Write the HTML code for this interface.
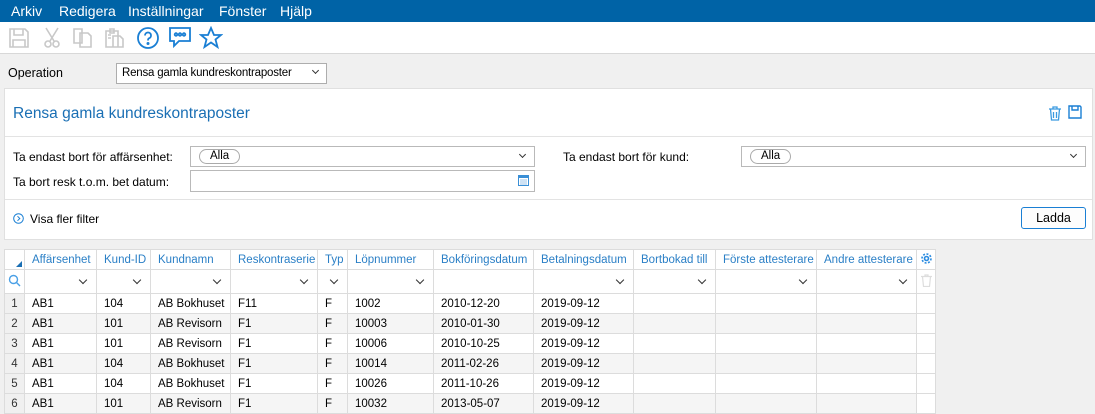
<!DOCTYPE html>
<html><head><meta charset="utf-8"><style>
*{box-sizing:border-box;margin:0;padding:0}
body{width:1095px;height:413px;overflow:hidden;background:#f0f0f0;font-family:"Liberation Sans",sans-serif;font-size:12px;color:#000;position:relative}
.a{position:absolute}
.menu{left:0;top:0;width:1095px;height:22px;background:#0063a6;color:#fff;font-size:14px}
.menu span{position:absolute;top:3px}
.tb{left:0;top:22px;width:1095px;height:32px;background:#fff;border-bottom:1px solid #d8d8d8}
.panel{left:4px;top:88px;width:1089px;height:152px;background:#fff;border:1px solid #e0e0e0}
.hl{height:1px;background:#e3e3e3}
.inp{border:1px solid #b9b9b9;background:#fff;height:21px}
.pill{position:absolute;left:8px;top:2px;height:15px;border:1px solid #aaa;border-radius:8px;padding:0 10px;font-size:11.5px;line-height:13px}
.chev{position:absolute;width:6px;height:6px;border-right:1.3px solid #333;border-bottom:1.3px solid #333;transform:rotate(45deg)}
table{position:absolute;left:4px;top:249px;border-collapse:collapse;table-layout:fixed;background:#fff}
td{border:1px solid #dcdcdc;height:20px;padding:0 0 0 7px;white-space:nowrap;overflow:hidden;font-size:11.5px}
tr.h td{color:#2a7fc6;background:#fff;height:20px;font-size:11.5px}
tr.f td{height:24px;position:relative}
tr.f td .chev{right:10px;top:7px}
td.n{background:#f0f0f0;padding:0;text-align:center;color:#333}
tr.e td{background:#f5f5f5}
tr.e td.n{background:#f0f0f0}
</style></head><body>
<div class="a menu"><span style="left:11px">Arkiv</span><span style="left:59px">Redigera</span><span style="left:128px">Inställningar</span><span style="left:219px">Fönster</span><span style="left:280px">Hjälp</span></div>
<div class="a tb">
<svg class="a" style="left:8px;top:5px" width="22" height="22" viewBox="0 0 22 22" fill="none" stroke="#c8c8c8" stroke-width="1.6"><path d="M2 2h15l3 3v15H2z"/><path d="M6 2v6h9V2M5 20v-7h12v7"/></svg>
<svg class="a" style="left:41px;top:5px" width="22" height="22" viewBox="0 0 22 22" fill="none" stroke="#c8c8c8" stroke-width="1.6"><path d="M5 1l8 13M17 1L9 14"/><circle cx="7" cy="17" r="3"/><circle cx="15" cy="17" r="3"/></svg>
<svg class="a" style="left:72px;top:5px" width="22" height="22" viewBox="0 0 22 22" fill="none" stroke="#c8c8c8" stroke-width="1.6"><path d="M2 2h8v14H2zM8 6h8l3 3v11H8z"/></svg>
<svg class="a" style="left:104px;top:5px" width="22" height="22" viewBox="0 0 22 22" fill="none" stroke="#c8c8c8" stroke-width="1.6"><path d="M2 4h12v16H2zM6 2h4v4H6zM9 9h7l3 3v8H9zM4 8h3M4 11h3"/></svg>
<svg class="a" style="left:136px;top:4px" width="24" height="24" viewBox="0 0 24 24" fill="none" stroke="#1a7fd4" stroke-width="1.8"><circle cx="12" cy="12" r="10"/><path d="M9 9.5a3 3 0 1 1 4 2.8c-1 .4-1 1.2-1 2.2"/><circle cx="12" cy="17.5" r=".6" fill="#1a7fd4"/></svg>
<svg class="a" style="left:167px;top:4px" width="26" height="24" viewBox="0 0 26 24" fill="none" stroke="#1a7fd4" stroke-width="1.8"><path d="M3 2h20v13H12l-5 5v-5H3z"/><circle cx="9" cy="8.5" r="1.3"/><circle cx="13" cy="8.5" r="1.3"/><circle cx="17" cy="8.5" r="1.3"/></svg>
<svg class="a" style="left:199px;top:4px" width="24" height="24" viewBox="0 0 24 24" fill="none" stroke="#1a7fd4" stroke-width="1.8"><path d="M12 2l3 7h7l-5.5 4.5 2 7.5L12 16.5 5.5 21l2-7.5L2 9h7z"/></svg>
</div>
<div class="a" style="left:8px;top:66px;font-size:12.5px">Operation</div>
<div class="a" style="left:116px;top:63px;width:211px;height:21px;border:1px solid #adadad;background:#fff;font-size:11.5px;padding:3px 0 0 5px;letter-spacing:-0.2px">Rensa gamla kundreskontraposter<div class="chev" style="left:196px;top:4px;width:5px;height:5px"></div></div>
<div class="a panel">
<div class="a" style="left:8px;top:16px;font-size:15.5px;color:#1a6fb4">Rensa gamla kundreskontraposter</div>
<svg class="a" style="left:1043px;top:17px" width="14" height="15" viewBox="0 0 14 15" fill="none" stroke="#3a9ae0" stroke-width="1.3"><path d="M1 3h12M5 3V1h4v2M2.5 3l1 11h7l1-11M5.5 6v6M8.5 6v6"/></svg>
<svg class="a" style="left:1063px;top:16px" width="14" height="14" viewBox="0 0 14 14" fill="none" stroke="#1a7fd4" stroke-width="1.4"><path d="M1 1h11l1 1v11H1z"/><path d="M4 1v4h6V1"/></svg>
<div class="a hl" style="left:0;top:47px;width:1087px"></div>
<div class="a" style="left:8px;top:61px">Ta endast bort för affärsenhet:</div>
<div class="a inp" style="left:185px;top:57px;width:345px"><div class="pill">Alla</div><div class="chev" style="right:9px;top:5px;width:5px;height:5px"></div></div>
<div class="a" style="left:558px;top:61px">Ta endast bort för kund:</div>
<div class="a inp" style="left:736px;top:57px;width:345px"><div class="pill">Alla</div><div class="chev" style="right:9px;top:5px;width:5px;height:5px"></div></div>
<div class="a" style="left:8px;top:86px">Ta bort resk t.o.m. bet datum:</div>
<div class="a inp" style="left:185px;top:81px;width:345px;height:22px"><svg class="a" style="right:5px;top:4px" width="11" height="11" viewBox="0 0 11 11"><rect x=".5" y=".5" width="10" height="10" fill="#fff" stroke="#3a8fd6"/><rect x="0" y="0" width="11" height="3" fill="#3a8fd6"/><path d="M2 5h7M2 7h7M2 9h7" stroke="#9cc6ea"/></svg></div>
<div class="a hl" style="left:0;top:110px;width:1087px"></div>
<svg class="a" style="left:8px;top:124px" width="11" height="11" viewBox="0 0 11 11" fill="none" stroke="#1a7fd4" stroke-width="1"><circle cx="5.5" cy="5.5" r="4.8"/><path d="M4.5 3.2l2.3 2.3-2.3 2.3"/></svg>
<div class="a" style="left:25px;top:123px">Visa fler filter</div>
<div class="a" style="left:1016px;top:118px;width:65px;height:22px;border:1px solid #1a7fd4;border-radius:3px;text-align:center;line-height:20px;font-size:12.5px;background:#fdfdfd">Ladda</div>
</div>
<table>
<colgroup><col style="width:20px"><col style="width:72px"><col style="width:54px"><col style="width:80px"><col style="width:87px"><col style="width:30px"><col style="width:86px"><col style="width:100px"><col style="width:100px"><col style="width:82px"><col style="width:101px"><col style="width:100px"><col style="width:19px"></colgroup>
<tr class="h"><td class="n" style="background:#fff;position:relative"><svg class="a" style="right:2px;bottom:2px" width="6" height="6"><path d="M6 0V6H0z" fill="#1a6fb4"/></svg></td><td>Affärsenhet</td><td>Kund-ID</td><td>Kundnamn</td><td>Reskontraserie</td><td>Typ</td><td>Löpnummer</td><td>Bokföringsdatum</td><td>Betalningsdatum</td><td>Bortbokad till</td><td>Förste attesterare</td><td>Andre attesterare</td><td style="padding:0;text-align:center"><svg width="13" height="13" viewBox="0 0 13 13" fill="none" stroke="#2a8be0" stroke-width="1.6"><circle cx="6.5" cy="6.5" r="2"/><circle cx="6.5" cy="6.5" r="4.5" stroke-dasharray="2 1.5"/></svg></td></tr>
<tr class="f"><td class="n" style="background:#fff"><svg width="13" height="13" viewBox="0 0 13 13" fill="none" stroke="#4aa0e6" stroke-width="1.4"><circle cx="5.5" cy="5.5" r="4"/><path d="M8.5 8.5l3.5 3.5"/></svg></td><td><div class="chev"></div></td><td><div class="chev"></div></td><td><div class="chev"></div></td><td><div class="chev"></div></td><td><div class="chev"></div></td><td><div class="chev"></div></td><td></td><td><div class="chev"></div></td><td><div class="chev"></div></td><td><div class="chev"></div></td><td><div class="chev"></div></td><td style="padding:0;text-align:center"><svg width="11" height="13" viewBox="0 0 11 13" fill="none" stroke="#ddd" stroke-width="1.2"><path d="M0 2.5h11M4 2.5V1h3v1.5M1.5 2.5l1 10h6l1-10"/></svg></td></tr>
<tr><td class="n">1</td><td>AB1</td><td>104</td><td>AB Bokhuset</td><td>F11</td><td>F</td><td>1002</td><td>2010-12-20</td><td>2019-09-12</td><td></td><td></td><td></td><td></td></tr>
<tr class="e"><td class="n">2</td><td>AB1</td><td>101</td><td>AB Revisorn</td><td>F1</td><td>F</td><td>10003</td><td>2010-01-30</td><td>2019-09-12</td><td></td><td></td><td></td><td style="background:#fff"></td></tr>
<tr><td class="n">3</td><td>AB1</td><td>101</td><td>AB Revisorn</td><td>F1</td><td>F</td><td>10006</td><td>2010-10-25</td><td>2019-09-12</td><td></td><td></td><td></td><td></td></tr>
<tr class="e"><td class="n">4</td><td>AB1</td><td>104</td><td>AB Bokhuset</td><td>F1</td><td>F</td><td>10014</td><td>2011-02-26</td><td>2019-09-12</td><td></td><td></td><td></td><td style="background:#fff"></td></tr>
<tr><td class="n">5</td><td>AB1</td><td>104</td><td>AB Bokhuset</td><td>F1</td><td>F</td><td>10026</td><td>2011-10-26</td><td>2019-09-12</td><td></td><td></td><td></td><td></td></tr>
<tr class="e"><td class="n">6</td><td>AB1</td><td>101</td><td>AB Revisorn</td><td>F1</td><td>F</td><td>10032</td><td>2013-05-07</td><td>2019-09-12</td><td></td><td></td><td></td><td style="background:#fff"></td></tr>
</table>
</body></html>
